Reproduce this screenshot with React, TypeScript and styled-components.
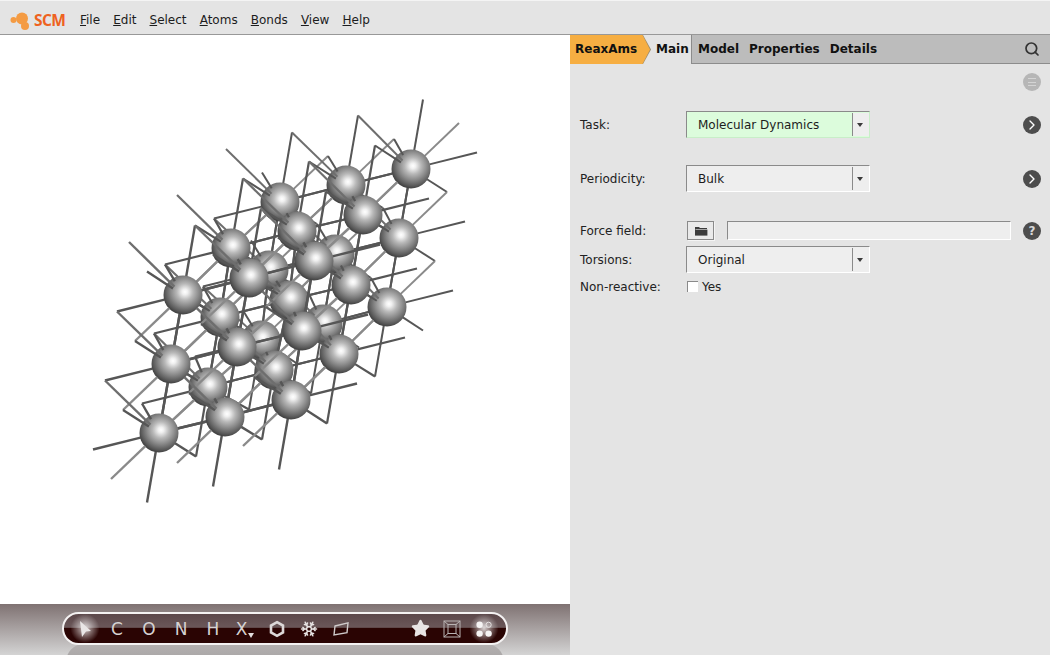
import React from "react";
import styled, { createGlobalStyle } from "styled-components";
import { ChevronRight, Search, Snowflake, Star } from "lucide-react";

const GlobalStyle = createGlobalStyle`
  html, body {
    margin: 0;
    padding: 0;
    background: #e4e4e4;
  }
  * {
    box-sizing: border-box;
  }
`;

// measured sphere centres, [k][j][i]
const ATOMS = [
  [
    [[411, 169], [346, 185], [280, 202]],
    [[399, 238], [335, 254], [269, 270]],
    [[387, 307], [323, 324], [261, 340]],
  ],
  [
    [[363, 215], [297, 231], [231, 248]],
    [[351, 285], [289, 300], [220, 317]],
    [[339, 354], [274, 370], [208, 387]],
  ],
  [
    [[314, 261], [249, 278], [183, 295]],
    [[302, 331], [237, 347], [171, 364]],
    [[291, 400], [225, 417], [159, 433]],
  ],
];
const A = [-66, 16.5];
const B = [-12, 69.5];
const C = [-48, 46];
const R = 19;
const DARK = "#565656";
const MID = "#6e6e6e";
const LIGHT = "#8a8a8a";

const clamp = (n: number) => Math.max(0, Math.min(2, n));
const isAtom = (i: number, j: number, k: number) =>
  i === clamp(i) && j === clamp(j) && k === clamp(k);

const site = (i: number, j: number, k: number) => {
  const [ci, cj, ck] = [clamp(i), clamp(j), clamp(k)];
  const p = ATOMS[ck][cj][ci];
  return [
    p[0] + (i - ci) * A[0] + (j - cj) * B[0] + (k - ck) * C[0],
    p[1] + (i - ci) * A[1] + (j - cj) * B[1] + (k - ck) * C[1],
  ];
};

type Bond = { x1: number; y1: number; x2: number; y2: number; color: string; width: number };
type Layer = { below: Bond[]; above: Bond[] };

// d: lattice step, tone, start offset, end offset on an atom, above: drawn over the spheres of its layer
const STEPS = [
  { d: [1, 0, 0], color: DARK, start: R, end: R, shift: 0, above: false },
  { d: [-1, 0, 0], color: DARK, start: R, end: R, shift: 0, above: false },
  { d: [0, 1, 0], color: DARK, start: R, end: R, shift: 0, above: false },
  { d: [0, -1, 0], color: DARK, start: R, end: R, shift: 0, above: false },
  { d: [0, 0, 1], color: LIGHT, start: R, end: R, shift: 0, above: true },
  { d: [0, 0, -1], color: LIGHT, start: R, end: R, shift: -1, above: true },
  { d: [1, -1, 0], color: MID, start: 12, end: R, shift: 0, above: true },
  { d: [0, -1, 1], color: DARK, start: 12, end: R, shift: 0, above: true },
  { d: [0, 1, -1], color: DARK, start: R, end: R, shift: -1, above: true },
  { d: [1, 0, -1], color: DARK, start: 16, end: 13, shift: 0, above: true },
];

const buildLayers = () => {
  const layers: Record<number, Layer> = {};
  [-1, 0, 1, 2].forEach((n) => (layers[n] = { below: [], above: [] }));
  for (let k = 0; k < 3; k++) {
    for (let j = 0; j < 3; j++) {
      for (let i = 0; i < 3; i++) {
        const p = site(i, j, k);
        STEPS.forEach((s) => {
          const [ti, tj, tk] = [i + s.d[0], j + s.d[1], k + s.d[2]];
          const q = site(ti, tj, tk);
          const len = Math.hypot(q[0] - p[0], q[1] - p[1]);
          const end = isAtom(ti, tj, tk) ? s.end : 0;
          if (len <= s.start + end) return;
          const ux = (q[0] - p[0]) / len;
          const uy = (q[1] - p[1]) / len;
          const bond = {
            x1: p[0] + ux * s.start,
            y1: p[1] + uy * s.start,
            x2: q[0] - ux * end,
            y2: q[1] - uy * end,
            color: s.color,
            width: 2 + k * 0.2,
          };
          const layer = layers[k + s.shift];
          (s.above ? layer.above : layer.below).push(bond);
        });
      }
    }
  }
  return layers;
};

const Bonds = ({ items }: { items: Bond[] }) => (
  <>
    {items.map((b, n) => (
      <line key={n} x1={b.x1} y1={b.y1} x2={b.x2} y2={b.y2} stroke={b.color} strokeWidth={b.width} />
    ))}
  </>
);

const Molecule = () => {
  const layers = buildLayers();
  return (
    <MoleculeSvg viewBox="0 35 570 569">
      <defs>
        <radialGradient id="ball" cx="55%" cy="42%" r="60%">
          <stop offset="0%" stopColor="#ffffff" />
          <stop offset="12%" stopColor="#f0f0f0" />
          <stop offset="35%" stopColor="#b8b8b8" />
          <stop offset="60%" stopColor="#8a8a8a" />
          <stop offset="85%" stopColor="#5a5a5a" />
          <stop offset="100%" stopColor="#3a3a3a" />
        </radialGradient>
      </defs>
      {[-1, 0, 1, 2].map((k) => (
        <g key={k}>
          <Bonds items={layers[k].below} />
          {k >= 0 &&
            ATOMS[k].flat().map((p, n) => (
              <circle key={n} cx={p[0]} cy={p[1]} r={R + 0.5} fill="url(#ball)" />
            ))}
          <Bonds items={layers[k].above} />
        </g>
      ))}
    </MoleculeSvg>
  );
};

const Logo = () => (
  <LogoWrap>
    <svg width="24" height="22" viewBox="0 0 24 22">
      <circle cx="4.5" cy="11" r="3" fill="#f49b43" />
      <circle cx="13" cy="9.5" r="6" fill="#f49b43" />
      <circle cx="16" cy="17" r="4" fill="#f49b43" />
    </svg>
    <span>SCM</span>
  </LogoWrap>
);

const MENU = ["File", "Edit", "Select", "Atoms", "Bonds", "View", "Help"];

const Combo = ({ value, green }: { value: string; green?: boolean }) => (
  <ComboBox $green={green}>
    <ComboValue>{value}</ComboValue>
    <ComboArrow />
  </ComboBox>
);

const CursorIcon = () => (
  <svg width="16" height="18" viewBox="0 0 16 18">
    <path d="M3 1 L14 11 L9 11.5 L5 17 Z" fill="#e9e6e6" />
  </svg>
);

const ToolHexagon = () => (
  <svg width="18" height="18" viewBox="0 0 18 18">
    <path d="M9 2.2 L15 5.6 L15 12.4 L9 15.8 L3 12.4 L3 5.6 Z" fill="none" stroke="#dcd8d8" strokeWidth="2.6" />
  </svg>
);

const ToolPlane = () => (
  <svg width="18" height="18" viewBox="0 0 18 18">
    <path d="M3 6 L16 2.8 L15 12.6 L2 15 Z" fill="none" stroke="#cfcaca" strokeWidth="1.4" />
  </svg>
);

const ToolBox = () => (
  <svg width="18" height="18" viewBox="0 0 18 18" fill="none" stroke="#b9b3b3" strokeWidth="1">
    <rect x="1" y="1" width="16" height="16" />
    <rect x="5" y="4.5" width="8" height="9" />
    <path d="M1 1 L5 4.5 M17 1 L13 4.5 M1 17 L5 13.5 M17 17 L13 13.5" />
  </svg>
);

const ToolDots = () => (
  <svg width="18" height="18" viewBox="0 0 18 18">
    <circle cx="4.6" cy="4.8" r="3.2" fill="#f6f4f4" />
    <circle cx="13.6" cy="4.8" r="2.6" fill="none" stroke="#e6e2e2" strokeWidth="1" />
    <circle cx="4.6" cy="13.6" r="3.2" fill="#f6f4f4" />
    <circle cx="13.6" cy="13.6" r="3.2" fill="#f6f4f4" />
  </svg>
);

const App = () => {
  return (
    <Page>
      <GlobalStyle />
      <TopBar>
        <Logo />
        <MenuList>
          {MENU.map((m) => (
            <MenuItem key={m}>
              <u>{m[0]}</u>
              {m.slice(1)}
            </MenuItem>
          ))}
        </MenuList>
      </TopBar>
      <Body>
        <ViewColumn>
          <Viewport>
            <Molecule />
          </Viewport>
          <DockBar>
            <Dock>
              <DockCell $glow>
                <CursorIcon />
              </DockCell>
              <DockCell>C</DockCell>
              <DockCell>O</DockCell>
              <DockCell>N</DockCell>
              <DockCell>H</DockCell>
              <DockCell>
                X<DockCaret />
              </DockCell>
              <DockCell>
                <ToolHexagon />
              </DockCell>
              <DockCell>
                <Snowflake size={18} color="#e6e2e2" strokeWidth={2.2} />
              </DockCell>
              <DockCell>
                <ToolPlane />
              </DockCell>
              <DockSpacer />
              <DockCell>
                <Star size={19} color="#e8e4e4" fill="#e8e4e4" />
              </DockCell>
              <DockCell>
                <ToolBox />
              </DockCell>
              <DockCell $glow>
                <ToolDots />
              </DockCell>
            </Dock>
          </DockBar>
        </ViewColumn>
        <Panel>
          <TabBar>
            <EngineTab>
              <span>ReaxAms</span>
            </EngineTab>
            <ActiveTab>Main</ActiveTab>
            <Tab>Model</Tab>
            <Tab>Properties</Tab>
            <Tab>Details</Tab>
            <SearchButton>
              <Search size={16} color="#333" strokeWidth={2.6} />
            </SearchButton>
          </TabBar>
          <Form>
            <PanelTools>
              <RoundButton $muted>
                <MenuLines />
              </RoundButton>
            </PanelTools>
            <Row $top={20} $height={27}>
              <Label>Task:</Label>
              <Combo value="Molecular Dynamics" green />
              <Grow />
              <RoundButton>
                <ChevronRight size={16} color="#fff" strokeWidth={2} />
              </RoundButton>
            </Row>
            <Row $top={27} $height={27}>
              <Label>Periodicity:</Label>
              <Combo value="Bulk" />
              <Grow />
              <RoundButton>
                <ChevronRight size={16} color="#fff" strokeWidth={2} />
              </RoundButton>
            </Row>
            <Row $top={29} $height={19}>
              <Label>Force field:</Label>
              <FolderButton>
                <svg width="14" height="10" viewBox="0 0 14 10">
                  <path d="M1 1 H5 L6 2 H13 V3 H2 L1 4 Z" fill="#3c3c3c" />
                  <rect x="1" y="3.6" width="12.4" height="6" fill="#3c3c3c" />
                </svg>
              </FolderButton>
              <PathInput />
              <Grow />
              <RoundButton>
                <QuestionMark>?</QuestionMark>
              </RoundButton>
            </Row>
            <Row $top={6} $height={27}>
              <Label>Torsions:</Label>
              <Combo value="Original" />
            </Row>
            <Row $top={7} $height={13}>
              <Label>Non-reactive:</Label>
              <CheckLabel>
                <CheckBox />
                Yes
              </CheckLabel>
            </Row>
          </Form>
        </Panel>
      </Body>
    </Page>
  );
};

export default App;

const Page = styled.div`
  display: flex;
  flex-direction: column;
  width: 1050px;
  height: 655px;
  overflow: hidden;
  background: #e4e4e4;
  font-family: "DejaVu Sans", sans-serif;
  font-size: 12px;
  color: #1c1c1c;
`;

const TopBar = styled.header`
  display: flex;
  align-items: center;
  flex: 0 0 35px;
  padding: 5px 0 0 9px;
  background: #e4e4e4;
  border-top: 1px solid #f4f4f4;
  border-bottom: 1px solid #989898;
`;

const LogoWrap = styled.div`
  display: flex;
  align-items: center;
  width: 71px;
  span {
    margin-left: 1px;
    font-family: "Open Sans", sans-serif;
    font-size: 15.5px;
    font-weight: 700;
    letter-spacing: -0.6px;
    color: #ee6220;
  }
`;

const MenuList = styled.nav`
  display: flex;
  gap: 13.1px;
`;

const MenuItem = styled.span`
  color: #1c1c1c;
  cursor: default;
`;

const Body = styled.main`
  display: flex;
  flex: 1;
  min-height: 0;
`;

const ViewColumn = styled.section`
  display: flex;
  flex-direction: column;
  flex: 0 0 570px;
`;

const Viewport = styled.div`
  flex: 0 0 569px;
  background: #fff;
`;

const MoleculeSvg = styled.svg`
  display: block;
  width: 570px;
  height: 569px;
`;

const DockBar = styled.div`
  position: relative;
  flex: 1;
  padding: 8px 0 0 62px;
  overflow: hidden;
  background: linear-gradient(#7f7272, #d4d4d4);
  &::after {
    content: "";
    position: absolute;
    left: 66px;
    top: 40px;
    width: 438px;
    height: 24px;
    border-radius: 18px 18px 0 0;
    background: linear-gradient(#b4b0b0, #a2a0a0);
  }
`;

const Dock = styled.div`
  position: relative;
  z-index: 1;
  display: flex;
  align-items: center;
  width: 446px;
  height: 33px;
  padding-left: 5px;
  border: 2px solid #f4f2f2;
  border-radius: 17px;
  background: linear-gradient(#5c484a 0, #6a5759 46%, #2a0403 49%, #2a0403 100%);
`;

const DockCell = styled.div<{ $glow?: boolean }>`
  display: flex;
  align-items: center;
  justify-content: center;
  flex: 0 0 32px;
  height: 29px;
  font-family: "DejaVu Sans", sans-serif;
  font-size: 17px;
  color: #d6d2d2;
  background: ${(p) =>
    p.$glow
      ? "radial-gradient(circle closest-side, rgba(255,255,255,.8), rgba(255,255,255,.3) 60%, rgba(255,255,255,0))"
      : "none"};
`;

const DockCaret = styled.i`
  align-self: flex-end;
  width: 0;
  height: 0;
  margin: 0 0 5px 1px;
  border-left: 3.5px solid transparent;
  border-right: 3.5px solid transparent;
  border-top: 5px solid #e2dede;
`;

const DockSpacer = styled.div`
  flex: 0 0 47px;
`;

const Panel = styled.section`
  display: flex;
  flex-direction: column;
  flex: 1;
  background: #e4e4e4;
`;

const TabBar = styled.div`
  display: flex;
  align-items: stretch;
  flex: 0 0 29px;
  background: #bcbcbc;
  border-bottom: 1px solid #8c8c8c;
  font-weight: 700;
  font-size: 12px;
`;

const EngineTab = styled.div`
  position: relative;
  flex: 0 0 81px;
  margin-bottom: -1px;
  background: #e4e4e4;
  &::before,
  &::after {
    content: "";
    position: absolute;
    inset: 0;
  }
  &::before {
    background: #9a8a6a;
    clip-path: polygon(0 0, 73px 0, 81px 50%, 73px 100%, 0 100%);
  }
  &::after {
    right: 1px;
    background: #f6ae42;
    clip-path: polygon(0 0, 72.5px 0, 80px 50%, 72.5px 100%, 0 100%);
  }
  span {
    position: relative;
    z-index: 1;
    display: block;
    padding: 7px 0 0 5px;
    color: #111;
  }
`;

const Tab = styled.div`
  display: flex;
  align-items: center;
  padding: 0 5px;
  color: #111;
`;

const ActiveTab = styled(Tab)`
  flex: 0 0 41px;
  margin: 0 1px -1px 0;
  padding: 0 0 1px 5px;
  background: #e4e4e4;
  border-right: 1px solid #8c8c8c;
`;

const SearchButton = styled.div`
  display: flex;
  align-items: center;
  margin-left: auto;
  padding-right: 10px;
`;

const Form = styled.div`
  display: flex;
  flex-direction: column;
  padding: 0 8px 0 10px;
`;

const PanelTools = styled.div`
  display: flex;
  justify-content: flex-end;
  padding-top: 9px;
`;

const Row = styled.div<{ $top: number; $height: number }>`
  display: flex;
  align-items: center;
  height: ${(p) => p.$height}px;
  margin-top: ${(p) => p.$top}px;
`;

const Label = styled.label`
  flex: 0 0 106px;
  color: #222;
`;

const Grow = styled.div`
  flex: 1;
`;

const ComboBox = styled.div<{ $green?: boolean }>`
  display: flex;
  align-items: center;
  width: 184px;
  height: 27px;
  background: ${(p) => (p.$green ? "#dcfcdc" : "#eeeeee")};
  border: 1px solid;
  border-color: #8a8a8a ${(p) => (p.$green ? "#c8eec8" : "#fff")} ${(p) => (p.$green ? "#c8eec8" : "#fff")} #8a8a8a;
`;

const ComboValue = styled.span`
  flex: 1;
  padding-left: 11px;
  color: #1c1c1c;
`;

const ComboArrow = styled.span`
  position: relative;
  flex: 0 0 17px;
  height: 23px;
  background: #eeeeee;
  border-left: 1px solid #8a8a8a;
  &::after {
    content: "";
    position: absolute;
    left: 4px;
    top: 10px;
    border-left: 3.5px solid transparent;
    border-right: 3.5px solid transparent;
    border-top: 4.5px solid #3a3a3a;
  }
`;

const RoundButton = styled.div<{ $muted?: boolean }>`
  display: flex;
  align-items: center;
  justify-content: center;
  width: 18px;
  height: 18px;
  margin-right: 1px;
  border-radius: 50%;
  background: ${(p) => (p.$muted ? "#b6b6b6" : "#4d4d4d")};
`;

const MenuLines = styled.span`
  width: 8px;
  height: 8px;
  border-top: 1px solid #d4d4d4;
  border-bottom: 1px solid #d4d4d4;
  background: linear-gradient(#d4d4d4, #d4d4d4) center / 100% 1px no-repeat;
`;

const QuestionMark = styled.span`
  font-size: 12px;
  font-weight: 700;
  color: #d8d8d8;
`;

const FolderButton = styled.button`
  display: flex;
  align-items: center;
  justify-content: center;
  width: 27px;
  height: 19px;
  margin: 0 13px 0 1px;
  padding: 0;
  background: #eaeaea;
  border: 1px solid #8a8a8a;
  box-shadow: 1px 1px 0 #f4f4f4;
`;

const PathInput = styled.div`
  width: 284px;
  height: 19px;
  background: #eeeeee;
  border: 1px solid;
  border-color: #8a8a8a #fff #fff #8a8a8a;
`;

const CheckLabel = styled.span`
  display: flex;
  align-items: center;
  gap: 4px;
  margin-left: 1px;
  color: #222;
`;

const CheckBox = styled.span`
  width: 11px;
  height: 11px;
  background: #fff;
  border-top: 1px solid #8a8a8a;
  border-left: 1px solid #8a8a8a;
`;
